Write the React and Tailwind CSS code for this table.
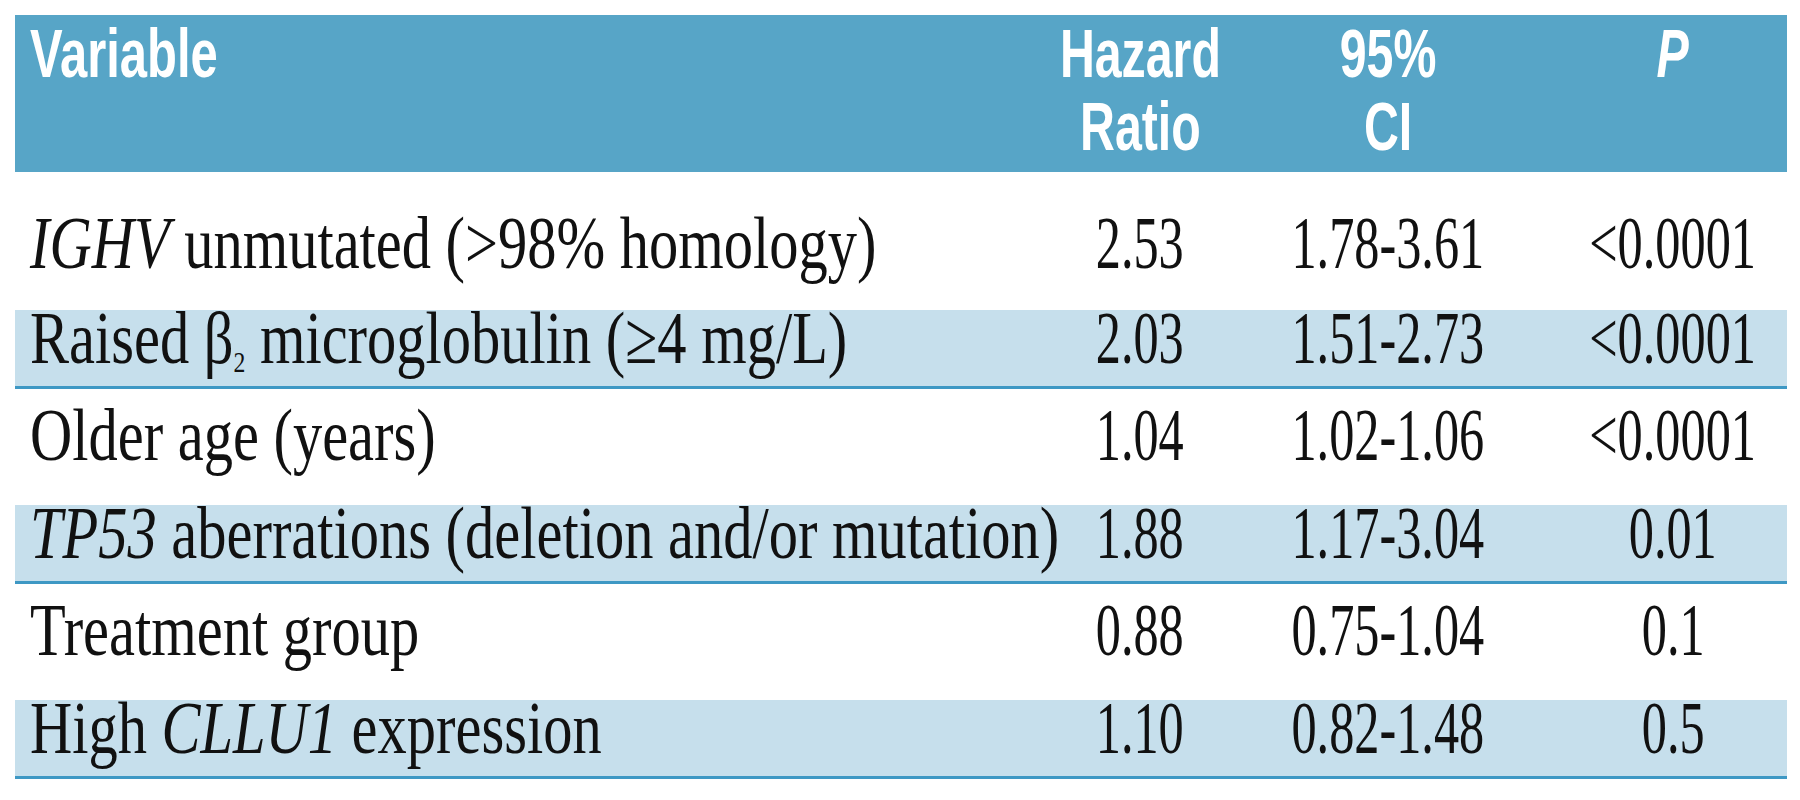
const rows = [
  { v: <><i>IGHV</i> unmutated (&gt;98% homology)</>, hr: "2.53", ci: "1.78-3.61", p: "<0.0001", shaded: false, first: true },
  { v: <>Raised β<span className="relative top-[9px] text-[30px]">2</span> microglobulin (≥4 mg/L)</>, hr: "2.03", ci: "1.51-2.73", p: "<0.0001", shaded: true },
  { v: <>Older age (years)</>, hr: "1.04", ci: "1.02-1.06", p: "<0.0001", shaded: false },
  { v: <><i>TP53</i> aberrations (deletion and/or mutation)</>, hr: "1.88", ci: "1.17-3.04", p: "0.01", shaded: true },
  { v: <>Treatment group</>, hr: "0.88", ci: "0.75-1.04", p: "0.1", shaded: false },
  { v: <>High <i>CLLU1</i> expression</>, hr: "1.10", ci: "0.82-1.48", p: "0.5", shaded: true },
];

function Num({ children }) {
  return (
    <div className="flex justify-center">
      <span className="inline-block shrink-0 whitespace-nowrap scale-x-[0.68]">{children}</span>
    </div>
  );
}

function HeadCell({ children }) {
  return (
    <div className="flex justify-center">
      <span className="inline-block shrink-0 whitespace-nowrap text-center scale-x-[0.71]">{children}</span>
    </div>
  );
}

export default function App() {
  return (
    <div className="min-h-screen bg-white pt-[15px] pl-[15px]">
      <div className="w-[1772px]">
        <div className="grid h-[157px] grid-cols-[1060px_130px_366px_216px] bg-[#57a5c7] pt-[2px] font-['Liberation_Sans',Arial,sans-serif] text-[68px] font-bold leading-[73px] text-white">
          <div className="pl-[15px]">
            <span className="inline-block origin-left scale-x-[0.72]">Variable</span>
          </div>
          <HeadCell>Hazard<br />Ratio</HeadCell>
          <HeadCell>95%<br />CI</HeadCell>
          <div className="pr-[12px]">
            <HeadCell><i>P</i></HeadCell>
          </div>
        </div>

        {rows.map((r, i) => (
          <div
            key={i}
            className={
              r.shaded
                ? "grid h-[79px] grid-cols-[1060px_130px_366px_216px] border-b-[3px] border-[#3e98c4] bg-[#c6dfec] font-['Liberation_Serif','Times_New_Roman',serif] text-[74px] leading-[56px] text-[#111]"
                : r.first
                ? "grid h-[138px] grid-cols-[1060px_130px_366px_216px] pt-[43px] font-['Liberation_Serif','Times_New_Roman',serif] text-[74px] leading-[56px] text-[#111]"
                : "grid h-[116px] grid-cols-[1060px_130px_366px_216px] pt-[18px] font-['Liberation_Serif','Times_New_Roman',serif] text-[74px] leading-[56px] text-[#111]"
            }
          >
            <div className="pl-[15px]">
              <span className="inline-block origin-left whitespace-nowrap scale-x-[0.79]">{r.v}</span>
            </div>
            <Num>{r.hr}</Num>
            <Num>{r.ci}</Num>
            <div className="pr-[12px]">
              <Num>{r.p}</Num>
            </div>
          </div>
        ))}
      </div>
    </div>
  );
}
